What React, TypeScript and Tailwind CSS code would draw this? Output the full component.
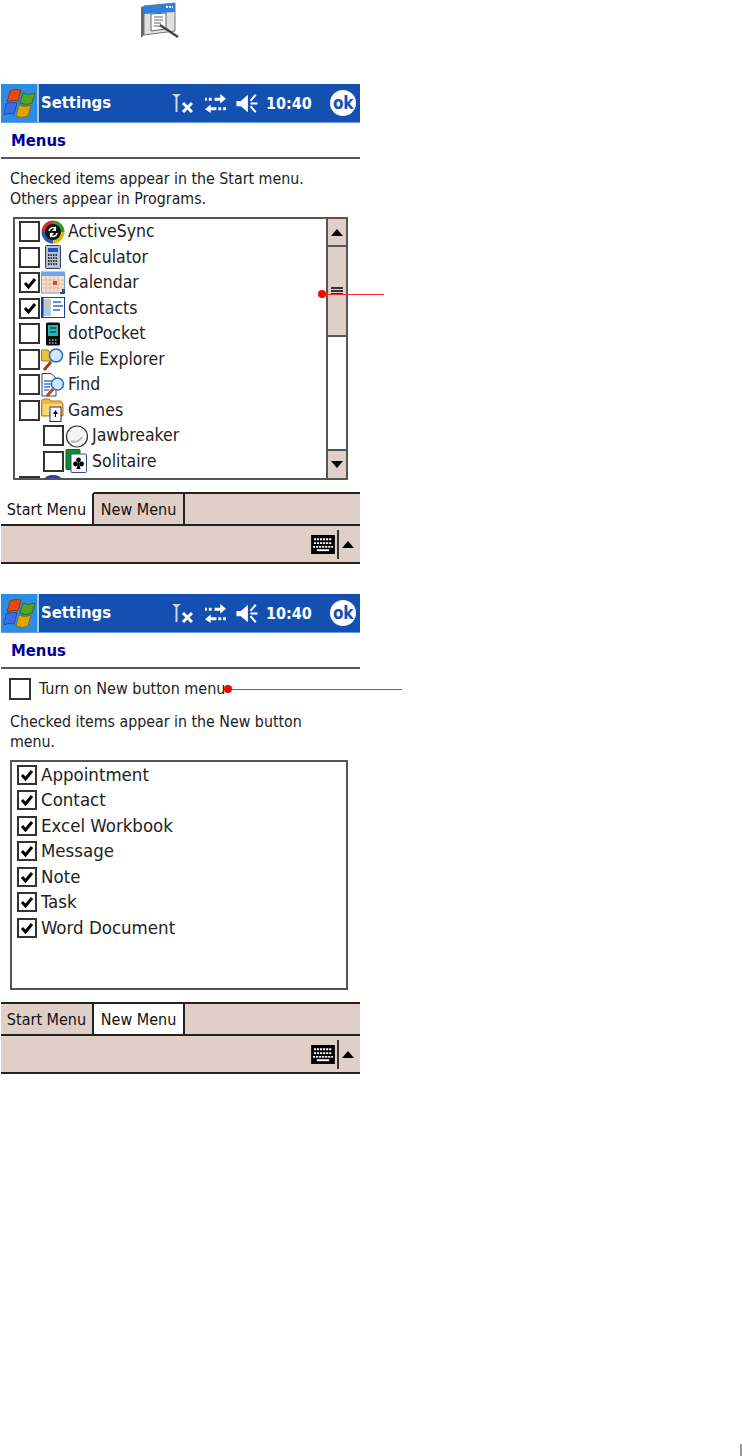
import React from 'react';

const beige = 'bg-[#e0cfc7]';

const WinFlag = () => (
    <svg width="36" height="36" viewBox="0 0 36 36">
        <path d="M9 6 Q14 3 20 5 L17 16 Q11 14 6 17 Z" fill="#e8490f" stroke="#8a2e0c" strokeWidth="0.8" />
        <path d="M22 8 Q27 11 34 8 L31 18 Q25 21 19 18 Z" fill="#5aa51c" stroke="#2f6410" strokeWidth="0.8" />
        <path d="M5 19 Q10 16 16 18 L13 29 Q8 27 3 30 Z" fill="#3a6fe8" stroke="#1c3f96" strokeWidth="0.8" />
        <path d="M18 20 Q24 23 30 20 L27 31 Q21 34 15 31 Z" fill="#e0a400" stroke="#806408" strokeWidth="0.8" />
    </svg>
);

const StatusIcons = () => (
    <div className="flex items-center">
        <svg width="21" height="20" viewBox="0 0 21 20">
            <path d="M0 1 H9 L5.5 4 V19 H3.5 V4 Z" fill="#cfd8ea" />
            <path d="M11 10 L20 19 M20 10 L11 19" stroke="#fff" strokeWidth="3" />
        </svg>
        <svg width="23" height="21" viewBox="0 0 24 22" className="ml-[11px]">
            <path d="M11 5 H17 V1 L23 6 L17 11 V8 H11 Z M1 5 H3 V8 H1 Z M5 5 H8 V8 H5 Z" fill="#fff" />
            <path d="M13 15 H7 V12 L1 17 L7 21 V18 H13 Z M15 15 H18 V18 H15 Z M20 15 H23 V18 H20 Z" fill="#fff" />
        </svg>
        <svg width="24" height="21" viewBox="0 0 26 24" className="ml-[8px]">
            <path d="M1 9 H6 L14 2 V22 L6 15 H1 Z" fill="#fff" />
            <path d="M23 2 L17 9 M17 12 H25 M17 15 L23 22" stroke="#fff" strokeWidth="2.2" fill="none" />
        </svg>
    </div>
);

const Header = () => (
    <div className="ml-[1px] flex h-[39px] bg-[#1450b0] border-b border-[#6f9be0] text-white">
        <div className="flex w-[36px] items-center justify-center bg-[#2b8ee6]">
            <WinFlag />
        </div>
        <div className="w-[2px] bg-[#a8c8f0]" />
        <div className="ml-[2px] w-[131px] self-center pt-[1px] text-[16.5px] font-bold leading-none">Settings</div>
        <StatusIcons />
        <div className="ml-[7px] w-[48px] self-center pt-[1px] text-[16px] font-bold leading-none">10:40</div>
        <div className="ml-[16px] flex h-[26px] w-[26px] self-center items-center justify-center rounded-full bg-white text-[17px] font-bold leading-none tracking-tight text-[#1450b0]">ok</div>
    </div>
);

const Check = () => (
    <svg width="14" height="14" viewBox="0 0 14 14">
        <path d="M2 7 L5.5 11 L12 3" fill="none" stroke="#000" strokeWidth="3" />
    </svg>
);

const Checkbox = ({ checked, size }: { checked: boolean; size: string }) => (
    <div className={`flex shrink-0 items-center justify-center border-2 border-[#333] bg-white ${size}`}>
        {checked && <Check />}
    </div>
);

const AppIcon = ({ name }: { name: string }) => {
    switch (name) {
        case 'sync':
            return (
                <svg width="24" height="24" viewBox="0 0 24 24">
                    <path d="M12 0.5 A11.5 11.5 0 0 0 0.5 12 H5 A7 7 0 0 1 12 5 Z" fill="#d93025" />
                    <path d="M12 0.5 A11.5 11.5 0 0 1 23.5 12 H19 A7 7 0 0 0 12 5 Z" fill="#2e9e2e" />
                    <path d="M23.5 12 A11.5 11.5 0 0 1 12 23.5 V19 A7 7 0 0 0 19 12 Z" fill="#e8b800" />
                    <path d="M12 23.5 A11.5 11.5 0 0 1 0.5 12 H5 A7 7 0 0 0 12 19 Z" fill="#2a55c8" />
                    <circle cx="12" cy="12" r="8" fill="#111" />
                    <path d="M8 11 A4 4 0 0 1 15 9 M16 13 A4 4 0 0 1 9 15" stroke="#fff" strokeWidth="1.6" fill="none" />
                    <path d="M15 6 V11 H11 Z M9 18 V13 H13 Z" fill="#fff" />
                </svg>
            );
        case 'calc':
            return (
                <svg width="24" height="24" viewBox="0 0 24 24">
                    <rect x="4.5" y="0.5" width="15" height="23" rx="1" fill="#b8c0d0" stroke="#2e3a70" />
                    <rect x="7" y="3" width="10" height="4" fill="#2050d0" />
                    <path d="M7 10 H17 M7 13 H17 M7 16 H17 M7 19 H17" stroke="#333" strokeWidth="1.8" strokeDasharray="1.5 1" />
                </svg>
            );
        case 'cal':
            return (
                <svg width="24" height="24" viewBox="0 0 24 24">
                    <rect x="0.5" y="1" width="23" height="21" fill="#f4e2d4" stroke="#7f9ad0" />
                    <rect x="1" y="1" width="22" height="4" fill="#6aa6e8" />
                    <path d="M5 5 V22 M9 5 V22 M13 5 V22 M17 5 V22 M1 9 H23 M1 13 H23 M1 17 H23" stroke="#e8a888" strokeWidth="0.7" />
                    <rect x="12" y="10" width="4" height="4" fill="#d84a20" />
                    <path d="M19 23 L24 23 L24 18 L21 18 L21 21 L19 21 Z" fill="#25508c" />
                </svg>
            );
        case 'contacts':
            return (
                <svg width="24" height="24" viewBox="0 0 24 24">
                    <rect x="0.5" y="1.5" width="23" height="20" fill="#fff" stroke="#1f3aa0" />
                    <rect x="2" y="3" width="8" height="17" fill="#a8cdf0" />
                    <rect x="4" y="6" width="4" height="5" fill="#e8c070" />
                    <rect x="1" y="2" width="1.5" height="19" fill="#1f3aa0" />
                    <path d="M12 6 H20 M12 10 H22 M12 14 H19" stroke="#2a70c8" strokeWidth="1.6" />
                </svg>
            );
        case 'pocket':
            return (
                <svg width="24" height="24" viewBox="0 0 24 24">
                    <rect x="5" y="0.5" width="14" height="23" rx="1.5" fill="#0c0c0c" />
                    <rect x="7" y="3" width="10" height="11" fill="#22b8b0" />
                    <path d="M9 6 H15 M9 10 H15" stroke="#0a5a58" strokeWidth="1.5" />
                    <path d="M8 18 H16 M8 21 H16" stroke="#aaa" strokeWidth="1.4" strokeDasharray="1.5 1.5" />
                </svg>
            );
        case 'explorer':
            return (
                <svg width="24" height="24" viewBox="0 0 24 24">
                    <path d="M0.5 3 H7 L8 5 H16 V14 H0.5 Z" fill="#f0c040" stroke="#a07a18" />
                    <path d="M3 23 L10 15" stroke="#a03a10" strokeWidth="3" />
                    <circle cx="15" cy="8.5" r="6.5" fill="#cfe8fa" stroke="#2a70c0" strokeWidth="1.5" />
                </svg>
            );
        case 'find':
            return (
                <svg width="24" height="24" viewBox="0 0 24 24">
                    <path d="M1 0.5 H10 L15 5 V23 H1 Z" fill="#fff" stroke="#2240a0" />
                    <path d="M3 8 H11 M3 11 H11 M3 14 H9 M3 17 H8" stroke="#3a7ad8" strokeWidth="1.3" />
                    <path d="M6 23 L12 16" stroke="#b04a10" strokeWidth="3" />
                    <circle cx="16.5" cy="11" r="6" fill="#cfe8fa" stroke="#2a70c0" strokeWidth="1.5" />
                </svg>
            );
        case 'games':
            return (
                <svg width="24" height="24" viewBox="0 0 24 24">
                    <path d="M0.5 4 Q0.5 1 3 1 H8 L10 3 H20 L22 6 V18 H0.5 Z" fill="#f0b840" stroke="#b07818" />
                    <rect x="2" y="6" width="19" height="11" fill="#f8d878" />
                    <rect x="9" y="9" width="11" height="14.5" fill="#fff" stroke="#2a2a70" />
                    <path d="M14.5 12 L12 16 H14 V19 H15 V16 H17 Z" fill="#000" />
                </svg>
            );
        case 'jaw':
            return (
                <svg width="24" height="24" viewBox="0 0 24 24">
                    <circle cx="12" cy="12.5" r="10.5" fill="#f4f4f4" stroke="#333" strokeWidth="1.2" />
                    <path d="M6 17 Q12 20 17 13" stroke="#bbb" strokeWidth="2" fill="none" />
                </svg>
            );
        case 'sol':
            return (
                <svg width="24" height="24" viewBox="0 0 24 24">
                    <rect x="1" y="0.5" width="14" height="20" rx="1" fill="#0f8a2e" stroke="#062" />
                    <rect x="6" y="5" width="15.5" height="18.5" rx="1" fill="#fff" stroke="#3a4a90" />
                    <circle cx="13.5" cy="11" r="2.4" fill="#000" />
                    <circle cx="10.5" cy="15" r="2.4" fill="#000" />
                    <circle cx="16.5" cy="15" r="2.4" fill="#000" />
                    <path d="M13.5 12 L11.5 20 H15.5 Z" fill="#000" />
                </svg>
            );
        default:
            return (
                <svg width="24" height="24" viewBox="0 0 24 24">
                    <ellipse cx="12" cy="5" rx="9" ry="5" fill="#2a3ad0" />
                </svg>
            );
    }
};

const Keyboard = () => (
    <svg width="24" height="19" viewBox="0 0 25 20">
        <rect width="25" height="20" fill="#000" />
        <path d="M3 4.5 H22 M3 8.5 H22" stroke="#fff" strokeWidth="2" strokeDasharray="2.2 1" />
        <path d="M2 12.5 H23" stroke="#fff" strokeWidth="2" strokeDasharray="2.2 1" />
        <path d="M6 16 H19" stroke="#fff" strokeWidth="2" />
    </svg>
);

const Triangle = ({ down }: { down?: boolean }) => (
    <svg width="12" height="7" viewBox="0 0 12 7">
        <path d={down ? 'M0 0 H12 L6 7 Z' : 'M6 0 L12 7 H0 Z'} fill="#000" />
    </svg>
);

const ScrollBar = () => (
    <div className="flex h-full w-[20px] shrink-0 flex-col border-l-2 border-[#555]">
        <div className={`flex h-[28px] shrink-0 items-center justify-center border-b-2 border-[#555] ${beige}`}>
            <Triangle />
        </div>
        <div className={`flex h-[90px] shrink-0 items-center justify-center border-b-2 border-[#555] ${beige}`}>
            <div className="flex h-[8px] w-[12px] items-center border-y-2 border-[#333]"><div className="h-[1.5px] w-full bg-[#333]" /></div>
        </div>
        <div className="flex-1 bg-white" />
        <div className={`flex h-[29px] shrink-0 items-center justify-center border-t-2 border-[#555] ${beige}`}>
            <Triangle down />
        </div>
    </div>
);

const Tabs = ({ active }: { active: number }) => {
    const names = ['Start Menu', 'New Menu'];
    const widths = ['w-[93px]', 'w-[91px]'];
    return (
        <div className={`ml-[1px] flex h-[34px] border-b-2 border-[#222] ${beige}`}>
            {names.map((n, i) => (
                <div
                    key={n}
                    className={`flex items-center justify-center border-r-2 border-t-2 border-r-[#222] pt-[2px] text-[16px] leading-none text-[#111] ${widths[i]} ${i === active ? 'bg-white' : ''} ${i === 0 && active === 0 ? 'border-t-white' : 'border-t-[#222]'}`}
                >
                    {n}
                </div>
            ))}
            <div className="flex-1 border-t-2 border-t-[#222]" />
        </div>
    );
};

const BottomBar = () => (
    <div className={`ml-[1px] flex h-[38px] items-center justify-end border-b-2 border-[#222] ${beige}`}>
        <Keyboard />
        <div className="ml-[2px] h-[29px] w-[2px] bg-[#333]" />
        <div className="ml-[3px] mr-[6px]"><Triangle /></div>
    </div>
);

const startItems = [
    { label: 'ActiveSync', icon: 'sync', checked: false, sub: false },
    { label: 'Calculator', icon: 'calc', checked: false, sub: false },
    { label: 'Calendar', icon: 'cal', checked: true, sub: false },
    { label: 'Contacts', icon: 'contacts', checked: true, sub: false },
    { label: 'dotPocket', icon: 'pocket', checked: false, sub: false },
    { label: 'File Explorer', icon: 'explorer', checked: false, sub: false },
    { label: 'Find', icon: 'find', checked: false, sub: false },
    { label: 'Games', icon: 'games', checked: false, sub: false },
    { label: 'Jawbreaker', icon: 'jaw', checked: false, sub: true },
    { label: 'Solitaire', icon: 'sol', checked: false, sub: true },
    { label: '', icon: 'more', checked: true, sub: false },
];

const newItems = ['Appointment', 'Contact', 'Excel Workbook', 'Message', 'Note', 'Task', 'Word Document'];

const Title = () => (
    <div className="ml-[1px] flex h-[36px] items-center border-b-2 border-[#555] pl-[10px] pt-[2px] text-[16.5px] font-bold leading-none text-[#000099]">
        Menus
    </div>
);

const StartScreen = () => (
    <div className="flex h-[480px] w-[360px] flex-col">
        <Header />
        <Title />
        <div className="mt-[10px] pl-[10px] text-[15.8px] leading-[19.5px] text-[#222]">
            <div>Checked items appear in the Start menu.</div>
            <div>Others appear in Programs.</div>
        </div>
        <div className="ml-[13px] mt-[9px] flex h-[263px] w-[335px] overflow-hidden border-2 border-[#555]">
            <div className="min-w-0 flex-1 overflow-hidden pl-[4px]">
                {startItems.map((it) => (
                    <div key={it.icon} className={`flex h-[25.5px] items-center text-[17.5px] leading-none text-[#222] ${it.sub ? 'pl-[24px]' : ''}`}>
                        <Checkbox checked={it.checked} size="h-[21px] w-[21px]" />
                        <div className="ml-[1px] w-[24px] shrink-0"><AppIcon name={it.icon} /></div>
                        <span className="ml-[3px]">{it.label}</span>
                    </div>
                ))}
            </div>
            <ScrollBar />
        </div>
        <div className="flex-1" />
        <Tabs active={0} />
        <BottomBar />
    </div>
);

const NewScreen = () => (
    <div className="flex h-[480px] w-[360px] flex-col">
        <Header />
        <Title />
        <div className="mt-[9px] flex items-center pl-[9px] text-[16px] leading-none text-[#222]">
            <Checkbox checked={false} size="h-[22px] w-[22px]" />
            <span className="ml-[8px]">Turn on New button menu</span>
        </div>
        <div className="mt-[12px] w-[320px] pl-[10px] text-[15.8px] leading-[20px] text-[#222]">
            Checked items appear in the New button menu.
        </div>
        <div className="ml-[10px] mt-[8px] h-[230px] w-[338px] border-2 border-[#555] pl-[5px]">
            {newItems.map((n) => (
                <div key={n} className="flex h-[25.5px] items-center text-[18.5px] leading-none text-[#222]">
                    <Checkbox checked size="h-[20px] w-[20px]" />
                    <span className="ml-[4px]">{n}</span>
                </div>
            ))}
        </div>
        <div className="flex-1" />
        <Tabs active={1} />
        <BottomBar />
    </div>
);

const SettingsIcon = () => (
    <svg width="40" height="38" viewBox="0 0 40 38">
        <path d="M1 6 L4 5 V34 L1 37 Z" fill="#666" />
        <path d="M4 5 L35 2 V30 L4 34 Z" fill="#e0e0e0" stroke="#777" />
        <path d="M4 5 L35 2 V11 L4 13 Z" fill="#2f7fe0" />
        <path d="M26 6 H33" stroke="#fff" strokeWidth="2" strokeDasharray="2 1" />
        <path d="M11 13 L26 12 V28 L11 30 Z" fill="#fff" stroke="#666" />
        <path d="M14 16 H23 M14 19 H23 M14 22 H21 M14 25 H21" stroke="#666" />
        <path d="M20 24 L38 36" stroke="#444" strokeWidth="2.5" />
    </svg>
);

const Callout = ({ className }: { className: string }) => (
    <div className={`absolute flex items-center ${className}`}>
        <div className="h-[8px] w-[8px] shrink-0 rounded-full bg-[#ff0000]" />
        <div className="h-[1px] flex-1 bg-[#f03030]" />
    </div>
);

export default function App() {
    return (
        <div className="relative h-[1456px] w-[742px] overflow-hidden bg-white font-['DejaVu_Sans_Condensed','DejaVu_Sans',sans-serif]">
            <div className="h-[84px] pl-[140px] pt-[1px]">
                <SettingsIcon />
            </div>
            <StartScreen />
            <div className="mt-[30px]">
                <NewScreen />
            </div>
            <Callout className="left-[318px] top-[290px] w-[66px]" />
            <Callout className="left-[224px] top-[685px] w-[178px]" />
            <div className="absolute bottom-0 right-0 h-[12px] w-[2px] bg-[#999]" />
        </div>
    );
}
